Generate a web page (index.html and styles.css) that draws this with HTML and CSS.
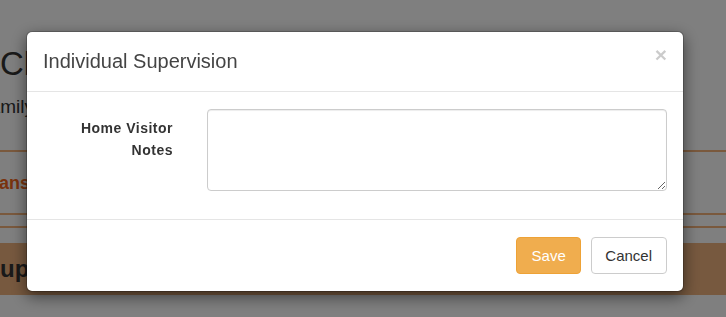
FILE: index.html
```html
<!DOCTYPE html>
<html lang="en">
<head>
<meta charset="utf-8">
<title>Individual Supervision</title>
<link rel="stylesheet" href="styles.css">
</head>
<body>
<div class="page">
  <h1 class="page-title">Checklist</h1>
  <p class="page-sub">Family Information</p>
  <div class="rule rule-first"></div>
  <div class="page-link">Transitions</div>
  <div class="rule rule-second"></div>
  <div class="rule rule-third"></div>
  <div class="band">Supervision</div>
</div>

<div class="backdrop"></div>

<div class="modal" role="dialog">
  <div class="modal-header">
    <button class="close" type="button" aria-label="Close">×</button>
    <h4 class="modal-title">Individual Supervision</h4>
  </div>
  <div class="modal-body">
    <div class="form-row">
      <label class="form-label" for="notes">Home Visitor Notes</label>
      <textarea class="form-control" id="notes"></textarea>
    </div>
  </div>
  <div class="modal-footer">
    <button class="btn btn-warning" type="button">Save</button>
    <button class="btn btn-default" type="button">Cancel</button>
  </div>
</div>
</body>
</html>
```

FILE: styles.css
```css
* { box-sizing: border-box; }

html, body {
  margin: 0;
  padding: 0;
  height: 100%;
  overflow: hidden;
}

body {
  background: #ffffff;
  font-family: "Liberation Sans", Arial, Helvetica, sans-serif;
  color: #333;
}

/* ---- underlying page ---- */
.page {
  display: flex;
  flex-direction: column;
}

.page-title {
  margin: 46px 0 0 0;
  font-size: 33px;
  line-height: 36px;
  font-weight: 500;
  color: #333;
  white-space: nowrap;
}

.page-sub {
  margin: 14px 0 0 0;
  font-size: 19px;
  line-height: 22px;
  text-indent: -22px;
  white-space: nowrap;
}

.rule {
  height: 2px;
  background: #f4b27a;
}
.rule-first { margin-top: 32px; }
.rule-second { margin-top: 18px; }
.rule-third { margin-top: 11px; }

.page-link {
  margin-top: 19px;
  font-size: 18px;
  line-height: 24px;
  font-weight: bold;
  color: #f2661a;
  text-indent: -18px;
  white-space: nowrap;
}

.band {
  margin-top: 15px;
  height: 52px;
  line-height: 52px;
  background: #eeb27e;
  font-size: 24px;
  font-weight: bold;
  color: #333;
  text-indent: -16px;
  white-space: nowrap;
}

/* ---- backdrop + modal ---- */
.backdrop {
  position: fixed;
  inset: 0;
  background: rgba(0, 0, 0, 0.5);
}

.modal {
  position: fixed;
  top: 31px;
  left: 26px;
  width: 658px;
  background: #fff;
  border: 1px solid rgba(0, 0, 0, 0.2);
  border-radius: 6px;
  box-shadow: 0 5px 15px rgba(0, 0, 0, 0.5);
  background-clip: padding-box;
}

.modal-header {
  padding: 15px 16px;
  border-bottom: 1px solid #e5e5e5;
}

.modal-title {
  margin: 0;
  font-size: 20px;
  line-height: 29px;
  font-weight: normal;
  color: #444;
}

.close {
  float: right;
  margin-top: -3px;
  padding: 0;
  border: 0;
  background: transparent;
  font-family: "Liberation Sans", Arial, sans-serif;
  font-size: 21px;
  font-weight: bold;
  line-height: 1;
  color: #000;
  opacity: 0.2;
  text-shadow: 0 1px 0 #fff;
  cursor: pointer;
}

.modal-body {
  padding: 17px 16px 28px 16px;
}

.form-row {
  display: grid;
  grid-template-columns: 130px 460px;
  column-gap: 34px;
  align-items: start;
}

.form-label {
  padding-top: 8px;
  text-align: right;
  font-size: 14px;
  line-height: 22px;
  font-weight: bold;
  letter-spacing: 0.5px;
  color: #333;
}

.form-control {
  display: block;
  width: 460px;
  height: 82px;
  margin: 0;
  padding: 6px 12px;
  border: 1px solid #ccc;
  border-radius: 4px;
  box-shadow: inset 0 1px 1px rgba(0, 0, 0, 0.075);
  font-family: inherit;
  font-size: 14px;
  color: #555;
  background: #fff;
  resize: vertical;
}

.modal-footer {
  display: flex;
  justify-content: flex-end;
  gap: 10px;
  padding: 17px 16px;
  border-top: 1px solid #e5e5e5;
}

.btn {
  padding: 7px 14px;
  font-family: inherit;
  font-size: 15px;
  line-height: 21px;
  border: 1px solid transparent;
  border-radius: 4px;
  cursor: pointer;
}

.btn-warning {
  color: #fff;
  background: #f0ad4e;
  border-color: #eea236;
  padding-left: 15px;
}

.btn-default {
  color: #333;
  background: #fff;
  border-color: #ccc;
  padding-left: 13.5px;
}
```
